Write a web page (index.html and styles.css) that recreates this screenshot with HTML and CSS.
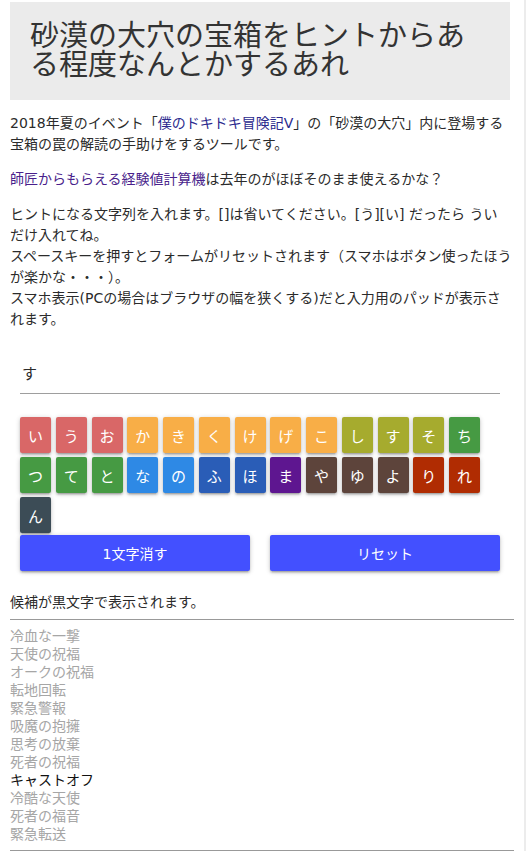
FILE: index.html
```html
<!DOCTYPE html>
<html lang="ja">
<head>
<meta charset="utf-8">
<title>砂漠の大穴の宝箱をヒントからある程度なんとかするあれ</title>
<link rel="stylesheet" href="styles.css">
</head>
<body>
<div class="page">
  <h1 class="title">砂漠の大穴の宝箱をヒントからある程度なんとかするあれ</h1>
  <p class="text first">2018年夏のイベント「<a class="link link-event" href="#">僕のドキドキ冒険記V</a>」の「砂漠の大穴」内に登場する宝箱の罠の解読の手助けをするツールです。</p>
  <p class="text"><a class="link link-calc" href="#">師匠からもらえる経験値計算機</a>は去年のがほぼそのまま使えるかな？</p>
  <p class="text">ヒントになる文字列を入れます。[]は省いてください。[う][い] だったら うい<span class="nw">だけ入れてね。</span><br>スペースキーを押すとフォームがリセットされます（スマホはボタン使ったほうが楽かな・・・）。<br>スマホ表示(PCの場合はブラウザの幅を狭くする)だと入力用のパッドが表示さ<span class="nw">れます。</span></p>

  <div class="tool">
    <input class="hint" type="text" value="す">
    <div class="keypad">
      <button class="key k-red">い</button>
      <button class="key k-red">う</button>
      <button class="key k-red">お</button>
      <button class="key k-orange">か</button>
      <button class="key k-orange">き</button>
      <button class="key k-orange">く</button>
      <button class="key k-orange">け</button>
      <button class="key k-orange">げ</button>
      <button class="key k-orange">こ</button>
      <button class="key k-olive">し</button>
      <button class="key k-olive">す</button>
      <button class="key k-olive">そ</button>
      <button class="key k-green">ち</button>
      <button class="key k-green">つ</button>
      <button class="key k-green">て</button>
      <button class="key k-green">と</button>
      <button class="key k-blue">な</button>
      <button class="key k-blue">の</button>
      <button class="key k-navy">ふ</button>
      <button class="key k-navy">ほ</button>
      <button class="key k-purple">ま</button>
      <button class="key k-brown">や</button>
      <button class="key k-brown">ゆ</button>
      <button class="key k-brown">よ</button>
      <button class="key k-rust">り</button>
      <button class="key k-rust">れ</button>
      <button class="key k-slate">ん</button>
    </div>
    <div class="actions">
      <button class="act">1文字消す</button>
      <button class="act">リセット</button>
    </div>
  </div>

  <p class="text notice">候補が黒文字で表示されます。</p>
  <hr class="rule">
  <ul class="cands">
    <li class="cand">冷血な一撃</li>
    <li class="cand">天使の祝福</li>
    <li class="cand">オークの祝福</li>
    <li class="cand">転地回転</li>
    <li class="cand">緊急警報</li>
    <li class="cand">吸魔の抱擁</li>
    <li class="cand">思考の放棄</li>
    <li class="cand">死者の祝福</li>
    <li class="cand hit">キャストオフ</li>
    <li class="cand">冷酷な天使</li>
    <li class="cand">死者の福音</li>
    <li class="cand">緊急転送</li>
  </ul>
  <hr class="rule rule-end">
</div>
</body>
</html>
```

FILE: styles.css
```css
html, body {
  margin: 0;
  padding: 0;
  background: #ffffff;
}

body {
  font-family: "DejaVu Sans", "Noto Sans CJK JP", sans-serif;
  font-size: 14px;
  color: #2b2b2b;
}

.page {
  width: 504px;
  padding: 2px 10px 0 10px;
  border-right: 2px solid #ececec;
}

.title {
  margin: 0 4px 0 0;
  padding: 20px;
  background: #ebebeb;
  font-size: 29px;
  line-height: 29px;
  font-weight: 400;
  color: #333333;
}

.text {
  margin: 14px 0;
  line-height: 21px;
}

.text.first {
  margin-top: 13px;
}

.nw {
  white-space: nowrap;
}

.link {
  text-decoration: none;
}

.link-event {
  color: #2b2a8e;
}

.link-calc {
  color: #4a1f8c;
}

.tool {
  margin: 22px 14px 0 10px;
}

.hint {
  display: block;
  width: 100%;
  height: 42px;
  box-sizing: border-box;
  margin: 0;
  padding: 0 2px;
  border: 0;
  border-bottom: 1px solid #9e9e9e;
  border-radius: 0;
  background: transparent;
  font-family: inherit;
  font-size: 15px;
  color: #2b2b2b;
  outline: none;
}

.keypad {
  display: flex;
  flex-wrap: wrap;
  gap: 4px 4.76px;
  margin-top: 23px;
}

.key {
  width: 31px;
  height: 36px;
  padding: 0;
  margin: 0;
  border: 0;
  border-radius: 2px;
  font-family: inherit;
  font-size: 15px;
  color: #ffffff;
  box-shadow: 0 2px 2px 0 rgba(0,0,0,.14), 0 3px 1px -2px rgba(0,0,0,.12), 0 1px 5px 0 rgba(0,0,0,.2);
}

.k-red { background: #d96767; }
.k-orange { background: #f8ae47; }
.k-olive { background: #a6ab2e; }
.k-green { background: #469a43; }
.k-blue { background: #2e89e5; }
.k-navy { background: #2a5db7; }
.k-purple { background: #5e1690; }
.k-brown { background: #5d443b; }
.k-rust { background: #b02c02; }
.k-slate { background: #3c4c56; }

.actions {
  display: flex;
  justify-content: space-between;
  margin-top: 2px;
}

.act {
  width: 230px;
  height: 36px;
  padding: 0;
  margin: 0;
  border: 0;
  border-radius: 2px;
  background: #4350ff;
  color: #ffffff;
  font-family: inherit;
  font-size: 14px;
  box-shadow: 0 2px 2px 0 rgba(0,0,0,.14), 0 3px 1px -2px rgba(0,0,0,.12), 0 1px 5px 0 rgba(0,0,0,.2);
}

.text.notice {
  margin: 21px 0 0 0;
}

.rule {
  height: 0;
  margin: 6px 0 0 0;
  border: 0;
  border-top: 1px solid #999999;
}

.rule-end {
  margin-top: 7px;
}

.cands {
  list-style: none;
  margin: 7px 0 0 0;
  padding: 0;
}

.cand {
  font-size: 14px;
  line-height: 18px;
  color: #a6a6a6;
}

.cand.hit {
  color: #111111;
}
```
